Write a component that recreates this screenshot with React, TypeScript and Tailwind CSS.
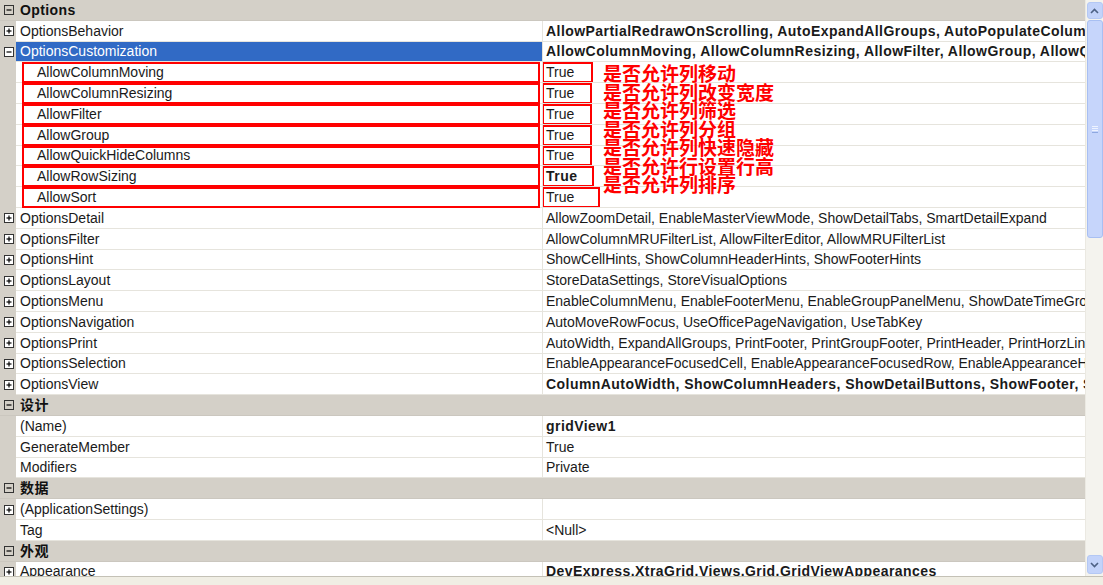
import React from 'react';

type Row =
  | { kind: 'cat'; label: string }
  | {
      kind: 'prop';
      label: string;
      value?: string;
      bold?: boolean;
      expand?: '+' | '-';
      indent?: boolean;
      selected?: boolean;
      box?: number;
    };

const rows: Row[] = [
  { kind: 'cat', label: 'Options' },
  { kind: 'prop', label: 'OptionsBehavior', expand: '+', bold: true, value: 'AllowPartialRedrawOnScrolling, AutoExpandAllGroups, AutoPopulateColumns, AutoSelectAllInEditor' },
  { kind: 'prop', label: 'OptionsCustomization', expand: '-', selected: true, bold: true, value: 'AllowColumnMoving, AllowColumnResizing, AllowFilter, AllowGroup, AllowQuickHideColumns' },
  { kind: 'prop', label: 'AllowColumnMoving', indent: true, value: 'True', box: 51 },
  { kind: 'prop', label: 'AllowColumnResizing', indent: true, value: 'True', box: 50 },
  { kind: 'prop', label: 'AllowFilter', indent: true, value: 'True', box: 50 },
  { kind: 'prop', label: 'AllowGroup', indent: true, value: 'True', box: 50 },
  { kind: 'prop', label: 'AllowQuickHideColumns', indent: true, value: 'True', box: 50 },
  { kind: 'prop', label: 'AllowRowSizing', indent: true, value: 'True', bold: true, box: 52 },
  { kind: 'prop', label: 'AllowSort', indent: true, value: 'True', box: 58 },
  { kind: 'prop', label: 'OptionsDetail', expand: '+', value: 'AllowZoomDetail, EnableMasterViewMode, ShowDetailTabs, SmartDetailExpand' },
  { kind: 'prop', label: 'OptionsFilter', expand: '+', value: 'AllowColumnMRUFilterList, AllowFilterEditor, AllowMRUFilterList' },
  { kind: 'prop', label: 'OptionsHint', expand: '+', value: 'ShowCellHints, ShowColumnHeaderHints, ShowFooterHints' },
  { kind: 'prop', label: 'OptionsLayout', expand: '+', value: 'StoreDataSettings, StoreVisualOptions' },
  { kind: 'prop', label: 'OptionsMenu', expand: '+', value: 'EnableColumnMenu, EnableFooterMenu, EnableGroupPanelMenu, ShowDateTimeGroupIntervalItems' },
  { kind: 'prop', label: 'OptionsNavigation', expand: '+', value: 'AutoMoveRowFocus, UseOfficePageNavigation, UseTabKey' },
  { kind: 'prop', label: 'OptionsPrint', expand: '+', value: 'AutoWidth, ExpandAllGroups, PrintFooter, PrintGroupFooter, PrintHeader, PrintHorzLines' },
  { kind: 'prop', label: 'OptionsSelection', expand: '+', value: 'EnableAppearanceFocusedCell, EnableAppearanceFocusedRow, EnableAppearanceHideSelection' },
  { kind: 'prop', label: 'OptionsView', expand: '+', bold: true, value: 'ColumnAutoWidth, ShowColumnHeaders, ShowDetailButtons, ShowFooter, ShowGroupPanel' },
  { kind: 'cat', label: '设计' },
  { kind: 'prop', label: '(Name)', bold: true, value: 'gridView1' },
  { kind: 'prop', label: 'GenerateMember', value: 'True' },
  { kind: 'prop', label: 'Modifiers', value: 'Private' },
  { kind: 'cat', label: '数据' },
  { kind: 'prop', label: '(ApplicationSettings)', expand: '+', value: '' },
  { kind: 'prop', label: 'Tag', value: '<Null>' },
  { kind: 'cat', label: '外观' },
  { kind: 'prop', label: 'Appearance', expand: '+', bold: true, value: 'DevExpress.XtraGrid.Views.Grid.GridViewAppearances' },
];

const notes = [
  '是否允许列移动',
  '是否允许列改变宽度',
  '是否允许列筛选',
  '是否允许列分组',
  '是否允许列快速隐藏',
  '是否允许行设置行高',
  '是否允许列排序',
];

function ExpandBox({ sign, filled }: { sign: '+' | '-'; filled?: boolean }) {
  return (
    <svg width="10" height="10" viewBox="0 0 10 10" className="block">
      <rect x="0.5" y="0.5" width="9" height="9" fill={filled ? '#ffffff' : 'none'} stroke="#333" strokeWidth="1" />
      <line x1="2.5" y1="5" x2="7.5" y2="5" stroke="#000" strokeWidth="1.2" />
      {sign === '+' && <line x1="5" y1="2.5" x2="5" y2="7.5" stroke="#000" strokeWidth="1.2" />}
    </svg>
  );
}

function GridRow({ row }: { row: Row }) {
  if (row.kind === 'cat') {
    return (
      <div className="flex h-[20.8px] items-center bg-[#d4d0c8] border-b border-[#cbc7bf]">
        <div className="w-[16px] flex justify-center shrink-0 pl-[1px]">
          <ExpandBox sign="-" />
        </div>
        <span className="pl-[4px] font-bold tracking-[0.4px] text-[#111]">{row.label}</span>
      </div>
    );
  }

  return (
    <div className="flex h-[20.8px]">
      <div className="w-[16px] shrink-0 bg-[#d4d0c8] flex items-center justify-center pl-[1px]">
        {row.expand && <ExpandBox sign={row.expand} filled />}
      </div>
      <div
        className={`relative w-[527px] shrink-0 flex items-center border-b border-r border-[#e6e4dd] ${
          row.selected ? 'bg-[#316ac5] text-white' : 'bg-white text-[#1a1a1a]'
        } ${row.indent ? 'pl-[21px]' : 'pl-[4px]'}`}
      >
        <span className="whitespace-nowrap">{row.label}</span>
        {row.box && (
          <div className="absolute top-0 bottom-[-1px] left-[6px] right-[2px] border-2 border-[#ff0000]" />
        )}
      </div>
      <div className="relative flex-1 min-w-0 flex items-center bg-white border-b border-[#e6e4dd] pl-[3px] overflow-hidden">
        <span className={`whitespace-nowrap text-[#1a1a1a] ${row.bold ? 'font-bold tracking-[0.45px]' : ''}`}>{row.value}</span>
        {row.box && (
          <div
            className="absolute top-0 bottom-[-1px] left-[-1px] border-2 border-[#ff0000]"
            style={{ width: row.box }}
          />
        )}
      </div>
    </div>
  );
}

function Scrollbar() {
  return (
    <div className="w-[18px] shrink-0 h-full bg-[#f4f3ee] flex flex-col items-center pt-[2px] pb-[2px] border-l border-[#ebe9e2]">
      <div className="w-[16px] h-[17px] rounded-[3px] bg-[#c3d3fa] border border-[#b4c8f4] flex items-center justify-center">
        <svg width="9" height="6" viewBox="0 0 9 6">
          <path d="M1 5 L4.5 1.5 L8 5" fill="none" stroke="#4d6185" strokeWidth="1.6" />
        </svg>
      </div>
      <div className="mt-[1px] w-[16px] h-[218px] rounded-[3px] bg-[#c6d5fb] border border-[#a8bff2] flex items-center justify-center">
        <svg width="8" height="8" viewBox="0 0 8 8">
          <line x1="1" y1="1.5" x2="7" y2="1.5" stroke="#eef3ff" strokeWidth="1" />
          <line x1="1" y1="3.5" x2="7" y2="3.5" stroke="#eef3ff" strokeWidth="1" />
          <line x1="1" y1="5.5" x2="7" y2="5.5" stroke="#eef3ff" strokeWidth="1" />
          <line x1="1" y1="7.5" x2="7" y2="7.5" stroke="#8ea8e0" strokeWidth="1" />
        </svg>
      </div>
      <div className="flex-1" />
      <div className="w-[16px] h-[19px] rounded-[3px] bg-[#c3d3fa] border border-[#b4c8f4] flex items-center justify-center">
        <svg width="9" height="6" viewBox="0 0 9 6">
          <path d="M1 1 L4.5 4.5 L8 1" fill="none" stroke="#4d6185" strokeWidth="1.6" />
        </svg>
      </div>
    </div>
  );
}

export default function App() {
  return (
    <div className="relative w-[1103px] h-[585px] overflow-hidden bg-white font-['Liberation_Sans','Noto_Sans_CJK_SC',sans-serif] text-[14px] leading-none">
      <div className="flex h-[576px]">
        <div className="w-[1085px] shrink-0 overflow-hidden">
          {rows.map((r, i) => (
            <GridRow key={i} row={r} />
          ))}
        </div>
        <Scrollbar />
      </div>
      <div className="h-[9px] border-t border-[#c4c1b6] bg-[#f0eee4]" />

      {/* red annotations */}
      <div className="absolute left-[603px] top-[64px] text-[19px] leading-[18.5px] font-bold text-[#ff0000] font-['Noto_Sans_CJK_SC',sans-serif]">
        {notes.map((n) => (
          <div key={n}>{n}</div>
        ))}
      </div>
    </div>
  );
}
